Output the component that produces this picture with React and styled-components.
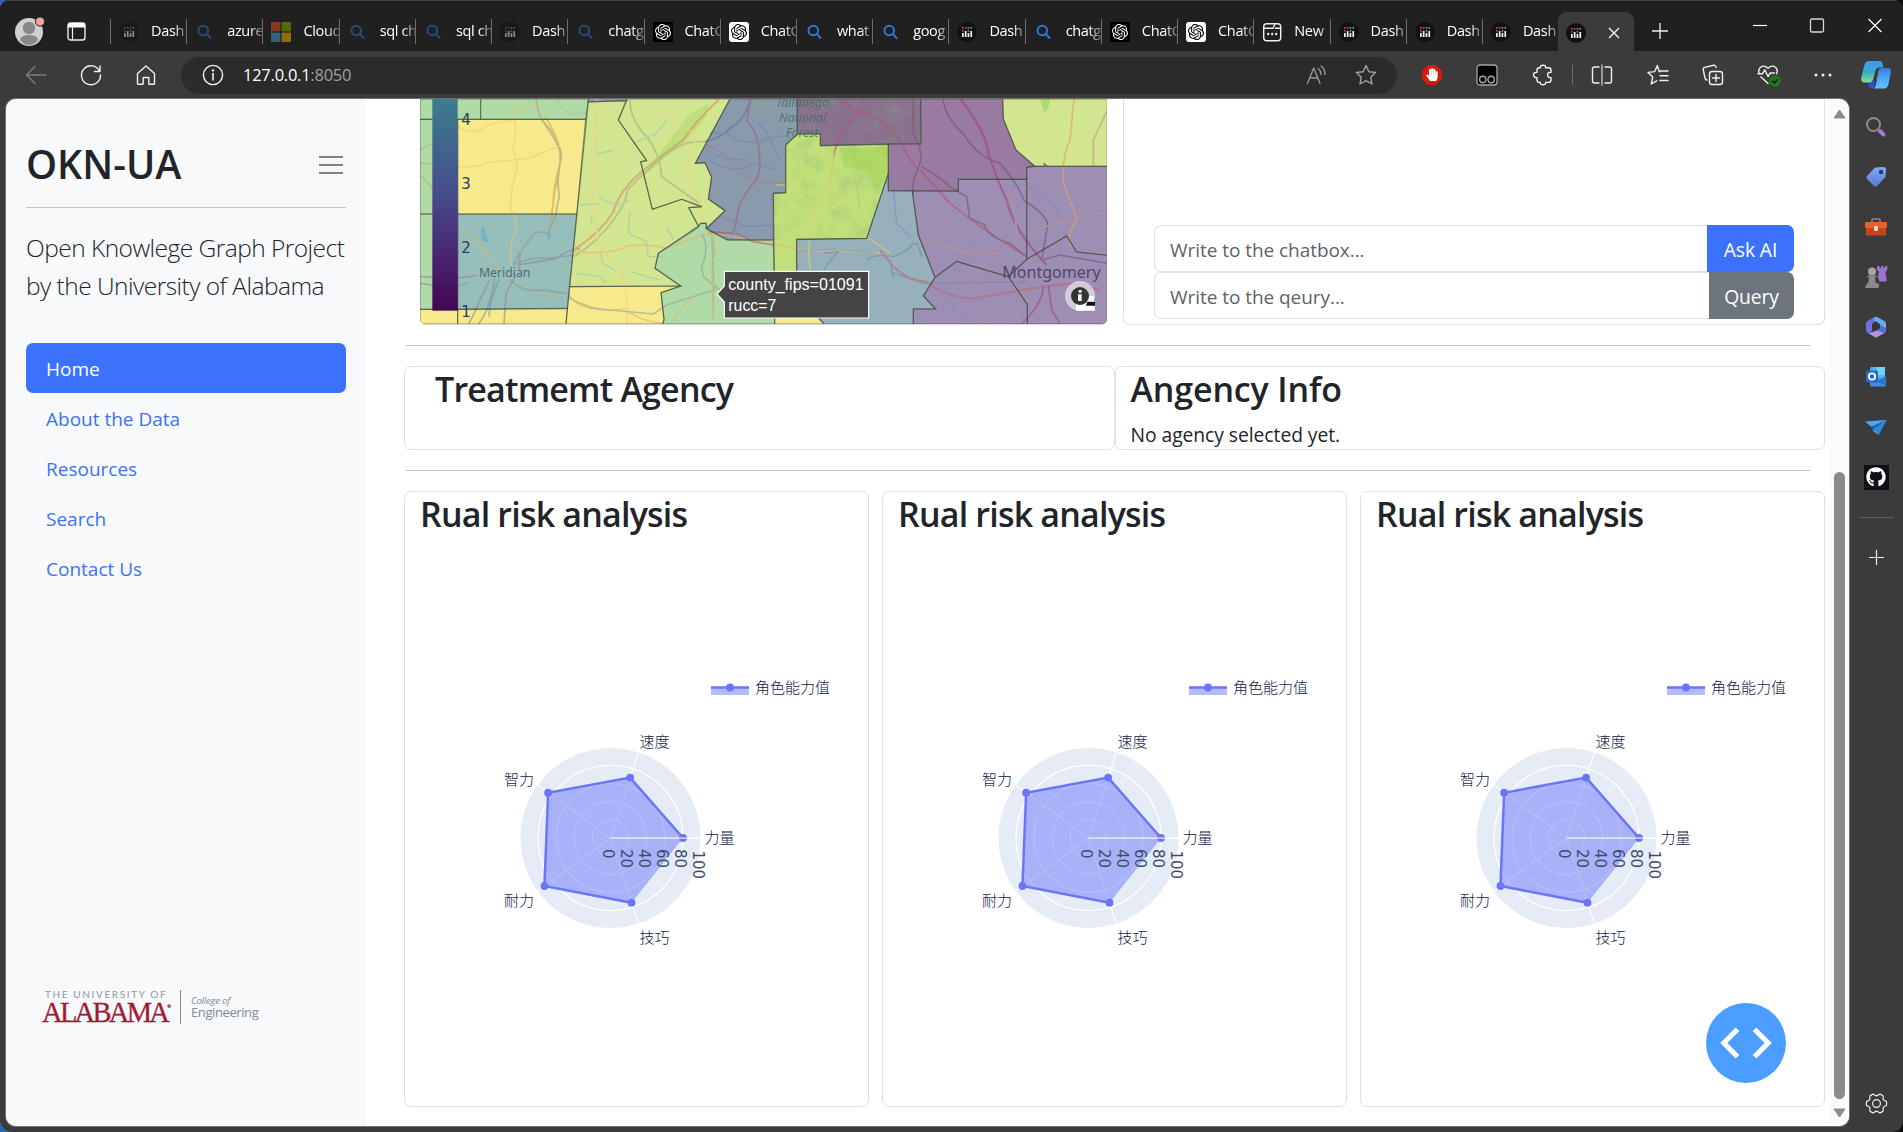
import React from 'react';
import styled, { createGlobalStyle } from 'styled-components';
import { SiOpenai } from 'react-icons/si';
import { FaGithub, FaHandPaper } from 'react-icons/fa';
import { PiGearSixLight } from 'react-icons/pi';

const UI = '"Open Sans", "Noto Sans", sans-serif';
const CHART = '"DejaVu Sans", "Noto Sans CJK SC", sans-serif';
const CJK = '"Noto Sans CJK SC", sans-serif';

const Global = createGlobalStyle`
  *, *::before, *::after { box-sizing: border-box; }
  html, body { margin: 0; padding: 0; overflow: hidden; background: #3b3b3b; }
  body { font-family: ${UI}; color: #212529; }
  svg { display: block; flex: none; }
`;

const Desktop = styled.div`
  width: 1903px;
  height: 1132px;
  background: linear-gradient(90deg, #2f63ad 0 40px, #0c0c0c 40px);
  overflow: hidden;
`;

const Window = styled.div`
  height: 100%;
  display: flex;
  flex-direction: column;
  background: #3b3b3b;
  border-radius: 9px 9px 11px 13px;
  overflow: hidden;
`;

const TabStrip = styled.header`
  height: 51px;
  display: flex;
  background: #202020;
  border-top: 1px solid #424444;
`;

const StripLead = styled.div`
  width: 110px;
  display: flex;
  align-items: center;
  padding: 10px 0 0 14px;
  gap: 22px;
  flex: none;
`;

const Tab = styled.div`
  width: 76.22px;
  flex: none;
  padding: 11px 0 0 9px;
  display: flex;
  align-items: center;
  gap: 12px;
  position: relative;
  &::before {
    content: '';
    position: absolute;
    left: 0;
    top: 18px;
    width: 1px;
    height: 25px;
    background: #6e6e6e;
  }
`;

const TabIcon = styled.span`
  width: 20px;
  height: 20px;
  flex: none;
  opacity: ${(p) => (p.$dim ? 0.5 : 1)};
`;

const TabLabel = styled.span`
  flex: 1;
  overflow: hidden;
  white-space: nowrap;
  color: #fff;
  font-size: 14.5px;
  line-height: 20px;
  letter-spacing: -0.35px;
  margin-top: -2px;
  mask-image: linear-gradient(90deg, #000 65%, rgba(0, 0, 0, 0.3) 100%);
`;

const ActiveTab = styled.div`
  width: 76px;
  height: 39px;
  margin-top: 11px;
  flex: none;
  border-radius: 9px 9px 0 0;
  background: #3b3b3b;
  display: flex;
  align-items: center;
  justify-content: space-between;
  padding: 2px 14px 0 8px;
`;

const StripButtons = styled.div`
  flex: 1;
  display: flex;
  padding: 22px 0 0 18px;
`;

const WindowButtons = styled.div`
  display: flex;
  gap: 41.5px;
  margin: -6px 0 0 83.5px;
`;

const Toolbar = styled.div`
  height: 48px;
  display: flex;
  align-items: center;
  flex: none;
`;

const NavButtons = styled.div`
  width: 181px;
  display: flex;
  padding-left: 24px;
  gap: 31px;
`;

const AddressBar = styled.div`
  width: 1216px;
  height: 37px;
  border-radius: 19px;
  background: #2b2b2b;
  display: flex;
  align-items: center;
  padding: 0 19px 0 20px;
`;

const Url = styled.span`
  flex: 1;
  margin: -2px 0 0 18px;
  font-size: 16.5px;
  letter-spacing: -0.25px;
  color: #a0a0a0;
  b { font-weight: 400; color: #fff; }
`;

const AddressActions = styled.div`
  display: flex;
  gap: 26px;
`;

const Extensions = styled.div`
  display: flex;
  align-items: center;
  margin-left: 7px;
`;

const ToolSlot = styled.div`
  width: ${(p) => p.$w || 55.5}px;
  display: flex;
  justify-content: center;
  flex: none;
`;

const ToolDivider = styled.i`
  width: 1px;
  height: 20px;
  background: #6c6c6c;
`;

const Body = styled.div`
  flex: 1;
  display: flex;
  padding: 0 0 6px 6px;
  min-height: 0;
`;

const Page = styled.div`
  width: 1843px;
  display: flex;
  background: #fff;
  border-radius: 10px;
  overflow: hidden;
  box-shadow: 0 0 0 1px #707070;
`;

const Sidebar = styled.aside`
  width: 360px;
  flex: none;
  background: #f8f9fb;
  padding: 35px 20px 0;
`;

const Brand = styled.div`
  display: flex;
  align-items: center;
  justify-content: space-between;
  height: 60px;
  padding-right: 3px;
`;

const BrandName = styled.h2`
  margin: 0;
  font-size: 39.5px;
  font-weight: 600;
  letter-spacing: 0;
`;

const Burger = styled.span`
  padding-top: 2px;
`;

const Rule = styled.div`
  height: 1px;
  background: #c3c4c6;
  margin: ${(p) => p.$m};
`;

const Lead = styled.p`
  margin: 0 -10px 0 0;
  font-size: 24.5px;
  line-height: 38px;
  font-weight: 300;
  letter-spacing: -0.53px;
  white-space: nowrap;
`;

const NavList = styled.nav`
  margin-top: 38px;
`;

const NavLink = styled.a`
  display: flex;
  align-items: center;
  height: 50px;
  padding: 2px 20px 0;
  border-radius: 7px;
  font-size: 19px;
  letter-spacing: 0;
  color: ${(p) => (p.$active ? '#fff' : '#3c72fb')};
  background: ${(p) => (p.$active ? '#3c72fb' : 'transparent')};
`;

const Logo = styled.div`
  display: flex;
  margin: 397px 0 0 16px;
  height: 34px;
`;

const LogoLeft = styled.div`
  width: 139px;
  border-right: 1px solid #7e8a92;
  small {
    display: block;
    margin-left: 3px;
    font-size: 10px;
    line-height: 9px;
    letter-spacing: 1.62px;
    color: #8d979d;
    font-family: Lato, sans-serif;
    white-space: nowrap;
  }
  strong {
    display: block;
    font: 400 28.5px/26px "Liberation Serif", serif;
    letter-spacing: -2.7px;
    color: #9e1b32;
    -webkit-text-stroke: 0.3px #9e1b32;
    margin-top: 1px;
    white-space: nowrap;
  }
  sup { font-size: 5px; line-height: 0; vertical-align: 14px; letter-spacing: 0; }
`;

const LogoRight = styled.div`
  padding: 5px 0 0 10px;
  color: #7e8a92;
  font-family: "Open Sans", sans-serif;
  em { display: block; font-size: 9.5px; line-height: 11px; letter-spacing: -0.2px; }
  span { display: block; font-size: 13px; line-height: 12px; letter-spacing: -0.4px; }
`;

const Main = styled.main`
  width: 1464px;
  flex: none;
  padding-left: 38px;
`;

const MapRow = styled.section`
  display: flex;
  height: 226px;
  padding-left: 16px;
  gap: 16px;
`;

const MapFrame = styled.div`
  width: 687px;
  height: 225px;
  border-radius: 0 0 5px 5px;
  overflow: hidden;
  box-shadow: 0 1px 0 #d8d8dc;
`;

const ChatPanel = styled.div`
  width: 702px;
  border: 1px solid #dee2e6;
  border-top: 0;
  border-radius: 0 0 7px 7px;
  padding: 126px 30px 0;
`;

const InputGroup = styled.div`
  display: flex;
  height: 47px;
`;

const Field = styled.div`
  flex: 1;
  border: 1px solid #dee2e6;
  border-right: 0;
  border-radius: 7px 0 0 7px;
  padding: 2px 0 0 15px;
  display: flex;
  align-items: center;
  font-size: 19px;
  letter-spacing: -0.05px;
  color: #5c636a;
`;

const Action = styled.button`
  border: 0;
  width: ${(p) => p.$w}px;
  border-radius: 0 7px 7px 0;
  background: ${(p) => p.$bg};
  color: #fff;
  font: 400 19.3px ${UI};
  letter-spacing: -0.1px;
  padding: 2px 0 0;
`;

const Row = styled.section`
  display: grid;
  grid-auto-flow: column;
  grid-auto-columns: minmax(0, 1fr);
  height: ${(p) => p.$h}px;
  gap: ${(p) => p.$gap}px;
  width: 1421px;
`;

const Card = styled.div`
  border: 1px solid #dee2e6;
  border-radius: 7px;
  padding: 0 0 0 ${(p) => p.$pad}px;
  overflow: hidden;
`;

const CardTitle = styled.h3`
  margin: 0;
  font-size: 34px;
  line-height: 44px;
  font-weight: 600;
  letter-spacing: ${(p) => (p.$wide ? '-0.15px' : '-0.8px')};
  white-space: nowrap;
`;

const Note = styled.p`
  margin: 10px 0 0;
  font-size: 19.3px;
  line-height: 28px;
  letter-spacing: -0.05px;
`;

const ChartBox = styled.div`
  margin: 69px 0 0 -15px;
`;

const ScrollTrack = styled.div`
  width: 19px;
  background: #fbfbfb;
  display: flex;
  flex-direction: column;
  align-items: center;
  padding: 10px 0 8px;
`;

const Thumb = styled.div`
  width: 11px;
  height: 627px;
  margin: 353px 0 9px;
  border-radius: 6px;
  background: #8b8b8b;
  flex: none;
`;

const EdgeBar = styled.aside`
  width: 54px;
  display: flex;
  flex-direction: column;
  align-items: center;
  padding: 3px 0 0;
`;

const EdgeSlot = styled.div`
  height: ${(p) => p.$h || 50}px;
  flex: none;
  display: flex;
  align-items: center;
  justify-content: center;
`;

const EdgeRule = styled.i`
  width: 35px;
  height: 1px;
  background: #5f5f5f;
`;

const DevButton = styled.button`
  position: absolute;
  left: 1706px;
  top: 1003px;
  width: 80px;
  height: 80px;
  border: 0;
  padding: 0;
  border-radius: 50%;
  background: #4b9dff;
  display: flex;
  align-items: center;
  justify-content: center;
`;

/* ---------- tab icons ---------- */
const DashIcon = () => (
  <svg width="20" height="20" viewBox="0 0 20 20">
    <circle cx="10" cy="10" r="10" fill="#101114" />
    <g fill="#f4f4f4">
      <rect x="5" y="11" width="1.7" height="4" /><rect x="7.8" y="9" width="1.7" height="6" />
      <rect x="10.6" y="11" width="1.7" height="4" /><rect x="13.4" y="9" width="1.7" height="6" />
    </g>
    <g fill="#c63a66"><rect x="5" y="5" width="1.7" height="1.7" /><rect x="5" y="8" width="1.7" height="1.7" /><rect x="7.8" y="5" width="1.7" height="1.7" /></g>
    <g fill="#6d8fa8"><rect x="10.6" y="5" width="1.7" height="1.7" /><rect x="10.6" y="8" width="1.7" height="1.7" /><rect x="13.4" y="5" width="1.7" height="1.7" /></g>
  </svg>
);
const SearchIcon = () => (
  <svg width="20" height="20" viewBox="0 0 20 20" fill="none" stroke="#2f75d6" strokeWidth="2">
    <circle cx="8.3" cy="8.5" r="4.8" /><path d="M11.8 12 L15.5 16" strokeLinecap="round" />
  </svg>
);
const MsIcon = () => (
  <svg width="20" height="20" viewBox="0 0 20 20">
    <rect width="9.4" height="9.4" fill="#f25022" /><rect x="10.6" width="9.4" height="9.4" fill="#7fba00" />
    <rect y="10.6" width="9.4" height="9.4" fill="#45a0e0" /><rect x="10.6" y="10.6" width="9.4" height="9.4" fill="#ffb900" />
  </svg>
);
const AiBox = styled.span`
  display: flex;
  width: 20px;
  height: 20px;
  align-items: center;
  justify-content: center;
  border-radius: ${(p) => (p.$light ? 3 : 0)}px;
  background: ${(p) => (p.$light ? '#fff' : '#000')};
  color: ${(p) => (p.$light ? '#000' : '#fff')};
`;
const NewIcon = () => (
  <svg width="20" height="20" viewBox="0 0 20 20" fill="none" stroke="#f0f0f0" strokeWidth="1.4">
    <rect x="1.7" y="1.7" width="17" height="17" rx="3" /><path d="M2 6.2 H11 L13 2.2 M13 6.2 H18" />
    <g fill="#f0f0f0" stroke="none"><circle cx="6.2" cy="12" r="1.2" /><circle cx="10.2" cy="12" r="1.2" /><circle cx="14.2" cy="12" r="1.2" /></g>
  </svg>
);

const ICONS = {
  dash: <DashIcon />,
  search: <SearchIcon />,
  ms: <MsIcon />,
  aiDark: <AiBox><SiOpenai size={16} /></AiBox>,
  aiLight: <AiBox $light><SiOpenai size={16} /></AiBox>,
  fresh: <NewIcon />,
};

const TABS = [
  ['dash', 'Dash', 1], ['search', 'azure', 1], ['ms', 'Cloud', 1], ['search', 'sql ch', 1], ['search', 'sql ch', 1],
  ['dash', 'Dash', 1], ['search', 'chatg', 1], ['aiDark', 'ChatG'], ['aiLight', 'ChatG'], ['search', 'what'],
  ['search', 'goog'], ['dash', 'Dash'], ['search', 'chatg'], ['aiDark', 'ChatG'], ['aiLight', 'ChatG'],
  ['fresh', 'New'], ['dash', 'Dash'], ['dash', 'Dash'], ['dash', 'Dash'],
];

const Line = ({ size = 24, color = '#f0f0f0', w = 1.4, children }) => (
  <svg width={size} height={size} viewBox="0 0 24 24" fill="none" stroke={color} strokeWidth={w} strokeLinecap="round" strokeLinejoin="round">
    {children}
  </svg>
);

const STAR = 'M12 2.5 L14.9 8.7 L21.6 9.5 L16.7 14.2 L18 21 L12 17.7 L6 21 L7.3 14.2 L2.4 9.5 L9.1 8.7 Z';

/* ---------- map ---------- */
const COUNTIES = [
  ['#b0daa6', '60,27 565,27 557,88 60,88'],
  ['#b0daa6', '60,88 173,88 173,372 60,372'],
  ['#b0daa6', '60,372 173,372 173,658 60,658'],
  ['#f6ea8c', '173,88 557,88 530,372 173,372'],
  ['#96bebb', '173,372 530,372 502,655 173,658'],
  ['#f6ea8c', '60,658 173,658 173,702 60,702'],
  ['#f6ea8c', '173,658 502,655 498,702 173,702'],
  ['#9294ae', '565,20 682,20 680,32 565,36'],
  ['#d2e590', '565,36 680,32 655,90 740,212 722,215 757,358 845,328 906,350 866,353 895,408 775,490 765,535 842,588 509,590'],
  ['#d2e590', '680,27 990,27 886,220 915,218 935,262 925,327 975,362 922,415 918,400 902,400 895,408 866,353 906,350 845,328 757,358 722,215 740,212 655,90'],
  ['#f6ea8c', '509,590 842,588 783,608 792,690 788,702 498,702'],
  ['#b0daa6', '775,490 895,412 902,400 918,400 918,415 982,450 1120,450 1124,702 788,702 792,690 783,608 842,588 765,535'],
  ['#8a9aac', '990,27 1192,27 1192,132 1157,165 1157,308 1120,310 1120,450 982,450 918,415 975,362 925,327 935,262 915,218 886,220'],
  ['#8b7190', '1192,27 1562,27 1562,160 1465,162 1261,167 1261,132 1192,132'],
  ['#c2e07a', '1192,132 1261,132 1261,167 1465,163 1465,250 1400,445 1190,448 1190,600 1124,600 1120,310 1157,308 1157,165'],
  ['#f6ea8c', '1124,600 1190,600 1272,702 1124,702'],
  ['#96b0bc', '1465,250 1465,302 1537,303 1555,435 1605,562 1570,618 1607,657 1540,657 1540,702 1272,702 1190,620 1190,448 1400,445'],
  ['#997aa0', '1465,162 1564,162 1562,27 1808,27 1810,87 1848,180 1904,228 1880,232 1880,268 1675,268 1675,303 1465,302'],
  ['#d2e590', '1808,27 2122,27 2122,229 1904,229 1848,180 1810,87'],
  ['#9d8fb3', '1537,303 1675,303 1675,268 1880,268 1880,508 1825,560 1670,514 1605,562 1555,435'],
  ['#9d8fb3', '1880,232 1904,229 1932,229 1932,220 1942,228 2122,229 2122,496 2030,486 2000,438 1880,508'],
  ['#9d8fb3', '1605,562 1670,514 1825,560 1882,643 1882,702 1540,702 1540,657 1607,657 1570,618'],
  ['#9d8fb3', '1825,560 1880,508 2000,438 2030,486 2122,496 2122,702 1882,702 1882,643'],
];

const ROADS = [
  ['#c98a62', 4, 'M408 27 Q410 60 430 95 Q470 130 483 185 Q480 240 465 300 Q455 360 450 420'],
  ['#e89a5c', 5, 'M435 80 Q485 150 480 220 Q460 290 458 350 L452 400'],
  ['#8f9d86', 5, 'M425 90 Q478 160 484 200 Q468 260 478 320 Q468 360 466 385 Q450 400 446 430 Q410 420 400 435 Q360 480 340 525'],
  ['#f2c968', 4, 'M173 230 Q230 235 260 217 Q360 210 390 203 L480 168'],
  ['#f2c968', 4, 'M345 90 Q350 150 337 180 Q355 210 350 240 Q330 300 332 360 Q360 400 345 430 Q325 470 335 530'],
  ['#f2c968', 4, 'M173 110 Q230 140 256 108 Q310 92 345 92 Q330 60 360 54 L410 46'],
  ['#d8b96c', 4, 'M173 405 Q220 440 250 480 Q290 530 330 570 Q400 620 508 615 L530 640 Q590 670 680 655 Q700 690 800 702'],
  ['#9b83a0', 5, 'M60 560 Q180 570 230 555 M350 525 Q420 515 470 505 Q500 480 540 475 M360 490 L358 540 M268 570 L235 640 Q220 680 205 702 M345 560 L318 610 L312 702'],
  ['#7c9a98', 5, 'M340 522 Q400 500 440 505 Q490 500 520 495 M330 570 Q370 610 430 600 L505 612 M298 565 Q265 640 268 680 M284 565 Q270 660 235 702 M60 580 Q190 600 200 575'],
  ['#d98f6a', 6, 'M520 480 Q600 430 640 365 Q660 300 720 250 Q790 190 850 150 Q890 90 958 27'],
  ['#a9b386', 6, 'M520 500 Q590 460 640 390 Q680 340 682 300 Q720 260 760 225 Q830 160 885 155 L925 155 M690 30 Q690 90 740 140 Q780 190 785 260 Q840 300 905 345'],
  ['#e8b465', 5, 'M520 485 Q640 495 680 468 Q750 460 800 475 L890 440 Q920 425 1000 440 L1120 460 Q1220 490 1300 482 L1440 490'],
  ['#edd479', 5, 'M590 27 L582 300 Q580 400 600 470 Q640 520 660 540 Q690 620 680 702 M750 27 Q800 80 880 130 L890 165 Q850 220 865 280 Q910 330 908 390'],
  ['#93a895', 5, 'M500 620 Q570 660 630 660 L760 672 L800 645 Q880 620 950 597 M905 430 Q930 470 905 530 L910 560 L960 600 M935 420 Q940 500 940 680 M1420 490 Q1300 470 1190 485'],
  ['#e0af6c', 4, 'M925 420 Q960 470 935 520 L940 690 M820 702 Q830 660 880 620'],
  ['#9cc8ae', 4, 'M470 30 Q480 60 520 75 L558 68 M590 190 L640 182 M700 160 L770 130 L800 90 M598 320 Q650 360 690 330 M540 345 L600 340 M690 365 L685 430 L740 455 L745 500 L790 500 M600 490 L610 520 L650 545 M530 550 L600 560 L620 580 M690 545 L780 570 M800 410 L820 450 M575 375 L575 400'],
  ['#6a6f8c', 5, 'M1052 27 Q1035 90 990 115 Q960 145 915 155'],
  ['#a05f86', 5, 'M1050 27 L1040 95 Q1070 115 1077 180 Q1085 240 1068 270 Q1020 330 1015 360 L1000 430 L925 425 M1010 430 L1060 455 L1120 465'],
  ['#6d87b4', 4, 'M930 130 Q980 120 1010 150 L1080 160 Q1120 130 1150 140 M920 180 Q980 220 1040 205 M930 210 Q1000 260 1060 220 L1130 240 M960 380 L1000 395 L1040 410 L1120 405 M1075 100 Q1110 130 1140 215'],
  ['#a97a86', 4, 'M920 165 Q1000 200 1025 250 L1070 275 L1157 280'],
  ['#b9516f', 5, 'M1310 27 L1375 62 Q1460 90 1500 150 Q1520 210 1570 250 L1650 340 Q1750 420 1880 500 M1375 65 Q1310 140 1300 200'],
  ['#7a5670', 5, 'M1540 27 L1540 130 Q1570 180 1560 220 Q1530 290 1540 310 M1565 230 Q1620 260 1650 290 L1700 320 Q1705 360 1710 385 L1755 405 Q1760 440 1830 460 L1880 500'],
  ['#a24685', 7, 'M1682 27 Q1760 130 1765 190 Q1800 290 1820 330 Q1840 420 1940 525'],
  ['#70547e', 5, 'M1628 27 Q1640 90 1690 130 Q1730 200 1800 220 Q1860 290 1870 330 Q1950 380 1942 410 Q1930 480 1925 510 L1980 495 L2122 520'],
  ['#e2a15f', 5, 'M2022 27 L2010 150 Q1985 200 1990 280 Q2020 350 2030 390 Q1995 440 2015 470'],
  ['#c69290', 5, 'M1880 440 Q1930 400 2030 390 Q2070 360 2122 372 M1820 300 Q1850 330 1850 470 M1570 455 L1640 468 Q1700 500 1800 488 M2080 229 L2080 150 L2122 60 M1300 200 Q1290 260 1290 280'],
  ['#d8d467', 5, 'M1300 180 L1290 270 Q1250 330 1240 380 Q1220 450 1230 540 M1130 285 Q1210 280 1225 310 Q1260 340 1325 300 Q1330 400 1400 440 L1470 490'],
  ['#a3d45c', 5, 'M1395 200 Q1380 220 1400 240 L1370 290 L1380 360 M1440 170 Q1420 220 1450 250'],
  ['#6e8b9b', 4, 'M1270 490 L1315 485 Q1280 520 1270 545 M1400 510 Q1420 490 1480 500 Q1530 480 1540 460 L1552 460 L1565 500 M1470 510 L1480 565 M1470 545 L1570 580 L1880 575'],
  ['#c1677b', 6, 'M1440 480 L1480 530 Q1530 575 1580 575 Q1640 625 1730 625 Q1850 600 1940 590 L2010 580 L2100 600'],
  ['#7b8fc0', 4, 'M1880 280 Q1930 330 1960 340 L1990 390 M1630 590 L1650 630 Q1680 690 1710 690 M1720 450 Q1740 500 1660 540 M1480 300 L1490 400 L1530 440'],
  ['#a24685', 5, 'M1930 585 Q1930 640 1865 702 M1945 585 L1955 660 L1980 702'],
  ['#c08a96', 4, 'M2080 600 L2080 702 M1760 702 L1800 650 M1840 702 L1880 600'],
  ['#a8ba7a', 5, 'M60 180 L97 160 M60 218 L97 222 M60 255 Q90 280 97 300'],
];

const SvgText = ({ x, y, size, color, w, anchor, style, family = '"Noto Sans", sans-serif', children, ...rest }) => (
  <text x={x} y={y} fontSize={size} fill={color} textLength={w} lengthAdjust="spacingAndGlyphs" textAnchor={anchor} fontStyle={style} fontFamily={family} {...rest}>
    {children}
  </text>
);

const CountyMap = () => (
  <svg width="687" height="225" viewBox="60 27 2061 675" preserveAspectRatio="none">
    <defs>
      <linearGradient id="viridis" x1="0" y1="0" x2="0" y2="1">
        <stop offset="0" stopColor="#3b7e8e" /><stop offset="0.22" stopColor="#40658e" />
        <stop offset="0.5" stopColor="#47458a" /><stop offset="0.75" stopColor="#482373" /><stop offset="1" stopColor="#420751" />
      </linearGradient>
      <filter id="terrain" x="0" y="0" width="1" height="1">
        <feTurbulence type="fractalNoise" baseFrequency="0.02" numOctaves="3" seed="4" />
        <feColorMatrix values="0 0 0 0 .2  0 0 0 0 .45  0 0 0 0 .2  0 0 0 2.6 -1.2" />
      </filter>
      <clipPath id="wooded"><path d="M1192 27 H1562 V160 H1465 V250 L1400 445 H1190 L1120 450 V310 H1157 V165 L1130 150 L1040 27Z" /></clipPath>
    </defs>
    <rect x="60" y="27" width="2061" height="675" fill="#b0daa6" />
    {COUNTIES.map(([fill, pts], i) => <polygon key={i} points={pts} fill={fill} />)}
    <rect x="1000" y="27" width="562" height="430" filter="url(#terrain)" clipPath="url(#wooded)" opacity="0.3" />
    <path d="M800 160 L870 70 L925 40 L920 80 L860 150 L780 215 L730 260Z" fill="#b2da70" opacity="0.6" />
    <path d="M1320 175 L1465 170 V250 L1430 300 L1400 240 L1330 230Z" fill="#a2d152" opacity="0.55" />
    <path d="M1920 27 h30 l-5 28 l-12 14z" fill="#b2da70" />
    <path d="M242 412 l12 -2 l4 30 l10 8 l-4 8 l-18 -4z M440 430 l14 4 l-6 22z" fill="#79b2c0" />
    <g fill="none" strokeLinejoin="round" opacity="0.62">
      {ROADS.map(([c, w, d], i) => <path key={i} d={d} stroke={c} strokeWidth={w} />)}
    </g>
    <g fill="none" stroke="#3c4438" strokeWidth="3.4">
      {COUNTIES.map(([, pts], i) => <polygon key={i} points={pts} strokeOpacity="0.55" />)}
      <path d="M242 27 V88" strokeOpacity="0.75" />
    </g>
    <SvgText x="237" y="560" size="36" color="#4d6f70" w="154">Meridian</SvgText>
    <SvgText x="1807" y="563" size="48" color="#51456b" w="295">Montgomery</SvgText>
    <g opacity="0.85">
      <SvgText x="1128" y="52" size="39" color="#44705f" w="160" style="italic">Talladega</SvgText>
      <SvgText x="1137" y="97" size="39" color="#44705f" w="142" style="italic">National</SvgText>
      <SvgText x="1158" y="140" size="39" color="#44705f" w="98" style="italic">Forest</SvgText>
    </g>
    <rect x="97" y="27" width="76" height="635" fill="url(#viridis)" />
    {[['4', 105], ['3', 297], ['2', 489], ['1', 681]].map(([t, y]) => (
      <SvgText key={t} x="184" y={y} size="45" color="#2a3f5f" family={CHART}>{t}</SvgText>
    ))}
    <path d="M973 544 H1406 V684 H973 V636 L951 612 L973 588Z" fill="#444" stroke="#fff" strokeWidth="3.5" />
    <SvgText x="985" y="599" size="48" color="#fff" w="406" family='"Liberation Sans", sans-serif'>county_fips=01091</SvgText>
    <SvgText x="985" y="662" size="48" color="#fff" w="144" family='"Liberation Sans", sans-serif'>rucc=7</SvgText>
    <circle cx="2040" cy="618" r="45" fill="#fff" fillOpacity="0.55" />
    <path d="M2028 640 H2062 L2085 648 V662 H2028Z" fill="#fff" /><path d="M2062 636 H2085 V647 H2058Z" fill="#111" />
    <path d="M2068 618 h14 v14 h-20z" fill="#fff" />
    <circle cx="2040" cy="618" r="27" fill="#333" />
    <path d="M2036 600 h9 v8 h-9z M2034 613 h11 v20 h-11z" fill="#fff" />
  </svg>
);

/* ---------- radar chart ---------- */
const VALUES = [80, 70, 85, 90, 75];
const UNIT = 0.907;
const CX = 205.5;
const CY = 233;
const at = (r, i) => {
  const a = (i * 72 * Math.PI) / 180;
  return [CX + r * Math.cos(a), CY - r * Math.sin(a)];
};
const POINTS = VALUES.map((v, i) => at(v * UNIT, i));
const LABELS = [['力量', 299.5, 238], ['速度', 234.5, 142], ['智力', 99, 179.5], ['耐力', 99, 300.5], ['技巧', 234.5, 337.5]];

const Radar = () => (
  <svg width="463" height="400" viewBox="0 0 463 400">
    <circle cx={CX} cy={CY} r="90" fill="#e5ecf6" />
    <g fill="none" stroke="#fff" strokeWidth="1.25">
      {[20, 40, 60, 80].map((v) => <circle key={v} cx={CX} cy={CY} r={v * UNIT} />)}
      {VALUES.map((_, i) => { const [x, y] = at(90, i); return <path key={i} d={`M${CX} ${CY} L${x} ${y}`} />; })}
    </g>
    <polygon points={POINTS.join(' ')} fill="#6b75f9" fillOpacity="0.5" />
    <polyline points={POINTS.join(' ')} fill="none" stroke="#6a75f9" strokeWidth="2.5" />
    {POINTS.map(([x, y], i) => <circle key={i} cx={x} cy={y} r="3.9" fill="#6a75f9" />)}
    <path d={`M${CX} ${CY} H${CX + 90}`} stroke="#fff" strokeWidth="1.25" strokeOpacity="0.85" />
    {[0, 20, 40, 60, 80, 100].map((v) => (
      <text key={v} transform={`translate(${CX - 7.8 + v * UNIT} ${v === 100 ? 245.5 : 244}) rotate(90)`} fontSize="15" fill="#3a4d6d" fontFamily={CHART}>{v}</text>
    ))}
    {LABELS.map(([t, x, y]) => <text key={t} x={x} y={y} fontSize="15" fontWeight="300" fill="#0f2344" fontFamily={CJK}>{t}</text>)}
    <rect x="306" y="82" width="38" height="8" fill="#6b75f9" fillOpacity="0.5" />
    <path d="M306 82.5 H344" stroke="#6a75f9" strokeWidth="2.5" />
    <circle cx="325" cy="82.5" r="3.9" fill="#6a75f9" />
    <text x="350" y="87.5" fontSize="15" fontWeight="300" fill="#0f2344" fontFamily={CJK}>角色能力值</text>
  </svg>
);

/* ---------- edge sidebar icons ---------- */
const EDGE = [
  <svg width="22" height="22" viewBox="0 0 22 22"><circle cx="8.5" cy="8.5" r="6.5" fill="none" stroke="#8b8b8b" strokeWidth="2" /><path d="M15 15 L18.5 18.5" stroke="#a77bd8" strokeWidth="4" strokeLinecap="round" /></svg>,
  <svg width="22" height="22" viewBox="0 0 22 22"><defs><linearGradient id="tg" x1="0" y1="0" x2="0" y2="1"><stop stopColor="#86aaf2" /><stop offset="1" stopColor="#5379d6" /></linearGradient></defs><path d="M10 1.5 L18.5 1 Q21 1 21 3.5 L20.5 11 L12 20 Q10.5 21.5 9 20 L2 13 Q.5 11.5 2 10Z" fill="url(#tg)" /><circle cx="16" cy="6" r="2.2" fill="#233a70" /></svg>,
  <svg width="24" height="22" viewBox="0 0 24 22"><path d="M8 6 V3.8 Q8 3 9 3 H15 Q16 3 16 3.8 V6" fill="none" stroke="#8b8b8b" strokeWidth="1.6" /><rect x="1" y="6" width="22" height="6" rx="1" fill="#e2622a" /><rect x="2" y="12" width="20" height="7.5" rx="1" fill="#c8451b" /><rect x="10" y="10" width="4" height="5" rx="1.4" fill="#ddd" /></svg>,
  <svg width="24" height="24" viewBox="0 0 24 24"><circle cx="8" cy="6.5" r="4" fill="#a5a5a5" /><path d="M3.5 10.5 H12.5 V12.5 H10.8 Q11 17 12.5 18.5 H15 V21.5 Q15 23 13 23 H3 Q1 23 1 21.5 L3.5 18.5 Q5 17 5.2 12.5 H3.5Z" fill="#8a8a8a" /><path d="M13 1 H15.5 V3 H17.2 V1 H19.5 V3 H21 V1 H23.3 V5 L21.5 7 L22.8 16.5 H15.5 L13.8 12 L15 7 L13 5Z" fill="#9d73cf" /></svg>,
  <svg width="22" height="22" viewBox="0 0 22 22"><path d="M10 .8 L2.5 5 Q1 6 1 8 V14 Q1 16 3 17 L7 15 V9 Q7 7 9 6 L14 3Z" fill="#7170e0" /><path d="M10 .8 Q11 .5 12 1 L19.5 5 Q21 6 21 8 V12 L15 10 V8 L11 5.5 Q9 5 9.5 3Z" fill="#5cb1ee" /><path d="M21 9 V14 Q21 16 19.5 17 L12 21.3 Q11 21.7 10 21.2 L3 17 L9.5 15.5 L15 12.5 V9Z" fill="#b692e4" /><path d="M15 9 L21 12 V14 Q21 16 19 17 L12 14.5 L15 12.5Z" fill="#4c72d8" /><path d="M11 7.2 L14.3 9.2 V12.6 L11 14.6 L7.7 12.6 V9.2Z" fill="#33343c" /></svg>,
  <svg width="22" height="22" viewBox="0 0 22 22"><rect x="5" y="1" width="15" height="15" rx="1.5" fill="#50b5ea" /><rect x="12" y="1" width="8" height="8" fill="#6fd2f7" /><path d="M5 12 H21 V19.5 Q21 20.5 20 20.5 H6 Q5 20.5 5 19.5Z" fill="#3f8fdc" /><path d="M12 16 L21 10 V19.5Z" fill="#2e74c4" /><rect x="1" y="4.5" width="12" height="12" rx="1.5" fill="#2a68c8" /><circle cx="7" cy="10.5" r="3.2" fill="none" stroke="#fff" strokeWidth="1.7" /></svg>,
  <svg width="22" height="18" viewBox="0 0 22 18"><path d="M0 3.5 L21.5 2 L13.5 17 L8.5 13.5 L6.5 9Z" fill="#4aa8ec" /><path d="M6.5 8.5 L21.5 2 L9 11 L8 15Z" fill="#1f5fa8" /><path d="M9 11 L21.5 2 L13.5 17Z" fill="#2f86d8" /></svg>,
];

const GithubTile = styled.span`
  width: 25px;
  height: 25px;
  background: #0d1117;
  color: #fff;
  display: flex;
  align-items: center;
  justify-content: center;
`;

export default function App() {
  return (
    <>
      <Global />
      <Desktop>
        <Window>
          <TabStrip>
            <StripLead>
              <svg width="31" height="30" viewBox="0 0 31 30">
                <circle cx="15" cy="16" r="14" fill="#d2d0ce" /><circle cx="15" cy="12" r="6.2" fill="#8a8886" />
                <path d="M6 24 Q7 19 15 19 Q23 19 24 24 Q20 29 15 29 Q10 29 6 24Z" fill="#8a8886" />
                <circle cx="26" cy="5.5" r="4.6" fill="#f1a5a0" stroke="#202020" strokeWidth="1" />
              </svg>
              <svg width="19" height="19" viewBox="0 0 19 19">
                <rect x="1" y="1" width="17" height="17" rx="2.5" fill="none" stroke="#eee" strokeWidth="1.4" />
                <path d="M1 3.5 Q1 1 3.5 1 H15.5 Q18 1 18 3.5 V5.5 H1Z" fill="#fff" /><path d="M5.5 5 V18" stroke="#eee" strokeWidth="1.2" />
              </svg>
            </StripLead>
            {TABS.map(([icon, label, dim], i) => (
              <Tab key={i}>
                <TabIcon $dim={dim}>{ICONS[icon]}</TabIcon>
                <TabLabel>{label}</TabLabel>
              </Tab>
            ))}
            <ActiveTab>
              <TabIcon>{ICONS.dash}</TabIcon>
              <svg width="12" height="12" viewBox="0 0 12 12"><path d="M1 1 L11 11 M11 1 L1 11" stroke="#f5f5f5" strokeWidth="1.4" /></svg>
            </ActiveTab>
            <StripButtons>
              <svg width="16" height="16" viewBox="0 0 16 16"><path d="M8 0 V16 M0 8 H16" stroke="#f0f0f0" strokeWidth="1.3" /></svg>
              <WindowButtons>
                <svg width="16" height="16" viewBox="0 0 16 16"><path d="M1 8.5 H15" stroke="#fff" strokeWidth="1.2" /></svg>
                <svg width="16" height="16" viewBox="0 0 16 16"><rect x="1.5" y="2" width="13" height="13" rx="1.5" fill="none" stroke="#d8d8d8" strokeWidth="1.3" /></svg>
                <svg width="16" height="16" viewBox="0 0 16 16"><path d="M1.5 2 L14.5 15 M14.5 2 L1.5 15" stroke="#fff" strokeWidth="1.2" /></svg>
              </WindowButtons>
            </StripButtons>
          </TabStrip>

          <Toolbar>
            <NavButtons>
              <Line color="#7d7d7d"><path d="M22 12 H2.5 M11 3.5 L2.5 12 L11 20.5" /></Line>
              <Line><path d="M20.5 8 A9.5 9.5 0 1 0 21.5 12 M21 3 V8.5 H15.5" /></Line>
              <Line><path d="M3.5 10.5 L12 3 L20.5 10.5 V20.5 Q20.5 21.3 19.7 21.3 H15.5 Q14.8 21.3 14.8 20.5 V14.5 H9.2 V20.5 Q9.2 21.3 8.5 21.3 H4.3 Q3.5 21.3 3.5 20.5Z" /></Line>
            </NavButtons>
            <AddressBar>
              <Line><circle cx="12" cy="12" r="9.6" /><path d="M12 10.5 V17" strokeWidth="1.6" /><circle cx="12" cy="7.4" r=".5" fill="#fff" /></Line>
              <Url><b>127.0.0.1</b>:8050</Url>
              <AddressActions>
                <Line color="#969696"><path d="M3.5 20.5 L9.7 5 L16 20.5 M5.8 15 H13.8 M14 5.5 Q17 7.5 17 11.5 M17 3 Q21 6 21 11.5" /></Line>
                <Line color="#a0a0a0"><path d={STAR} /></Line>
              </AddressActions>
            </AddressBar>
            <Extensions>
              <ToolSlot>
                <svg width="24" height="24" viewBox="0 0 24 24" color="#fff">
                  <path d="M8 2 H16 L22 8 V16 L16 22 H8 L2 16 V8Z" fill="#d8190f" /><FaHandPaper x="5.5" y="5" size={13} />
                </svg>
              </ToolSlot>
              <ToolSlot>
                <svg width="24" height="24" viewBox="0 0 24 24"><rect x="2" y="2" width="20" height="20" rx="3" fill="#000" stroke="#a5a5a5" strokeWidth="1.3" /><g fill="none" stroke="#a5a5a5" strokeWidth="1.4"><circle cx="7.8" cy="16.5" r="3.2" /><circle cx="16.2" cy="16.5" r="3.2" /></g></svg>
              </ToolSlot>
              <ToolSlot>
                <Line><path d="M6 7 Q6 4.8 8.2 4.8 H9.4 Q9 2.2 12 2.2 Q15 2.2 14.6 4.8 H17.6 Q20 4.8 20 7.2 V9.4 Q16.6 9 16.6 12 Q16.6 15 20 14.6 V17 Q20 19.4 17.6 19.4 H14.6 Q15 21.8 12 21.8 Q9 21.8 9.4 19.4 H8.2 Q6 19.4 6 17 V14.6 Q2.6 15 2.6 12 Q2.6 9 6 9.4Z" /></Line>
              </ToolSlot>
              <ToolSlot $w={4}><ToolDivider /></ToolSlot>
              <ToolSlot>
                <Line><path d="M9 4 H4.5 Q2.5 4 2.5 6 V18 Q2.5 20 4.5 20 H9 M15 4 H19.5 Q21.5 4 21.5 6 V18 Q21.5 20 19.5 20 H15" /><path d="M12 2 V22" stroke="#c5c5c5" /></Line>
              </ToolSlot>
              <ToolSlot>
                <Line><path d="M13.8 8.8 L13.2 8.6 L11.3 2.5 L8.8 8.6 L2 9.4 L6.8 13.9 L5.2 21 L10.6 17.8 M13 8 H22 M14 12.7 H22 M14 17.5 H22" /></Line>
              </ToolSlot>
              <ToolSlot>
                <Line><rect x="8.5" y="8.5" width="13" height="13" rx="2.5" /><path d="M15 11.5 V18.5 M11.5 15 H18.5 M6 17 Q4.5 17 4 15 L2.3 7 Q1.8 5 3.8 4.4 L12.5 2.2 Q14.5 1.8 15.2 4.5" /></Line>
              </ToolSlot>
              <ToolSlot>
                <svg width="26" height="26" viewBox="0 0 26 26" fill="none" stroke="#f0f0f0" strokeWidth="1.4" strokeLinecap="round" strokeLinejoin="round">
                  <path d="M3.2 11.5 Q1.8 7.5 4.6 5.2 Q8 2.6 12 6.2 Q16 2.6 19.4 5.2 Q22.4 7.8 20.6 11.8 M2 11.8 H6.5 L8.8 7.8 L12 14.5 L14.3 11 H18.5 M5 15 L12 21.5" />
                  <circle cx="19" cy="19" r="5.8" fill="#21761a" stroke="none" /><path d="M16.5 19.2 L18.4 21 L21.6 17.3" stroke="#111" strokeWidth="1.2" />
                </svg>
              </ToolSlot>
              <ToolSlot $w={52}>
                <svg width="24" height="24" viewBox="0 0 24 24" fill="#f0f0f0"><circle cx="5" cy="12" r="1.5" /><circle cx="12" cy="12" r="1.5" /><circle cx="19" cy="12" r="1.5" /></svg>
              </ToolSlot>
              <ToolSlot $w={54}>
                <svg width="32" height="30" viewBox="0 0 32 30">
                  <defs>
                    <linearGradient id="cpa" x1="0" y1="0" x2="0" y2="1"><stop stopColor="#3c9bf0" /><stop offset="0.5" stopColor="#35aacb" /><stop offset="1" stopColor="#8bdc8a" /></linearGradient>
                    <linearGradient id="cpb" x1="0" y1="0" x2="0" y2="1"><stop stopColor="#3b78ea" /><stop offset="0.5" stopColor="#4ca8f7" /><stop offset="1" stopColor="#5cc4fb" /></linearGradient>
                  </defs>
                  <path d="M8 21 H15 L14 28.5 H12 Q9.5 28.5 9 26Z" fill="#2b4fe0" />
                  <path d="M9 1 H20 Q22 1 22.5 3.5 L23.3 7.5 H19 Q16.5 7.5 15.5 10.5 L13 19.5 Q12 22.5 9.5 22.5 H5 Q0 22.5 1.3 17 L4.5 5 Q5.5 1 9 1Z" fill="url(#cpa)" />
                  <path d="M24 28.5 H14 Q15.5 27 16 24.5 L18.5 11 Q19.2 8 22 8 H27 Q32 8 30.7 13 L28.5 24 Q27.5 28.5 24 28.5Z" fill="url(#cpb)" />
                </svg>
              </ToolSlot>
            </Extensions>
          </Toolbar>

          <Body>
            <Page>
              <Sidebar>
                <Brand>
                  <BrandName>OKN-UA</BrandName>
                  <Burger><svg width="24" height="18" viewBox="0 0 24 18"><path d="M0 1 H24 M0 9 H24 M0 17 H24" stroke="#808285" strokeWidth="2" /></svg></Burger>
                </Brand>
                <Rule $m="13px 0 21px" />
                <Lead>Open Knowlege Graph Project<br />by the University of Alabama</Lead>
                <NavList>
                  {['Home', 'About the Data', 'Resources', 'Search', 'Contact Us'].map((t, i) => (
                    <NavLink key={t} $active={i === 0}>{t}</NavLink>
                  ))}
                </NavList>
                <Logo>
                  <LogoLeft><small>THE UNIVERSITY OF</small><strong>ALABAMA<sup>®</sup></strong></LogoLeft>
                  <LogoRight><em>College of</em><span>Engineering</span></LogoRight>
                </Logo>
              </Sidebar>

              <Main>
                <MapRow>
                  <MapFrame><CountyMap /></MapFrame>
                  <ChatPanel>
                    <InputGroup><Field>Write to the chatbox...</Field><Action $w={87} $bg="#3c72fb">Ask AI</Action></InputGroup>
                    <InputGroup><Field>Write to the qeury...</Field><Action $w={85} $bg="#6c757d">Query</Action></InputGroup>
                  </ChatPanel>
                </MapRow>
                <Rule $m="20px 20px 20px 2px" />
                <Row $h={84} $gap={0}>
                  <Card $pad={30}><CardTitle>Treatmemt Agency</CardTitle></Card>
                  <Card $pad={15}><CardTitle $wide>Angency Info</CardTitle><Note>No agency selected yet.</Note></Card>
                </Row>
                <Rule $m="20px 20px 20px 2px" />
                <Row $h={616} $gap={13}>
                  {[0, 1, 2].map((n) => (
                    <Card key={n} $pad={15}>
                      <CardTitle>Rual risk analysis</CardTitle>
                      <ChartBox><Radar /></ChartBox>
                    </Card>
                  ))}
                </Row>
              </Main>

              <ScrollTrack>
                <svg width="13" height="10" viewBox="0 0 13 10"><path d="M6.5 1 L12 9 H1Z" fill="#8b8b8b" stroke="#8b8b8b" strokeLinejoin="round" /></svg>
                <Thumb />
                <svg width="13" height="10" viewBox="0 0 13 10"><path d="M6.5 9 L12 1 H1Z" fill="#8b8b8b" stroke="#8b8b8b" strokeLinejoin="round" /></svg>
              </ScrollTrack>
            </Page>

            <EdgeBar>
              {EDGE.map((icon, i) => <EdgeSlot key={i}>{icon}</EdgeSlot>)}
              <EdgeSlot $h={50}><GithubTile><FaGithub size={20} /></GithubTile></EdgeSlot>
              <EdgeSlot $h={30}><EdgeRule /></EdgeSlot>
              <EdgeSlot $h={50}><svg width="15" height="15" viewBox="0 0 15 15"><path d="M7.5 0 V15 M0 7.5 H15" stroke="#eee" strokeWidth="1.2" /></svg></EdgeSlot>
              <EdgeSlot $h={493} />
              <EdgeRule />
              <EdgeSlot $h={57}><PiGearSixLight size={25} color="#f0f0f0" /></EdgeSlot>
            </EdgeBar>
          </Body>
        </Window>
        <DevButton>
          <svg width="62" height="62" viewBox="0 0 24 24" fill="#fff"><path d="M9.4 16.6L4.8 12l4.6-4.6L8 6l-6 6 6 6 1.4-1.4zm5.2 0l4.6-4.6-4.6-4.6L16 6l6 6-6 6-1.4-1.4z" /></svg>
        </DevButton>
      </Desktop>
    </>
  );
}
